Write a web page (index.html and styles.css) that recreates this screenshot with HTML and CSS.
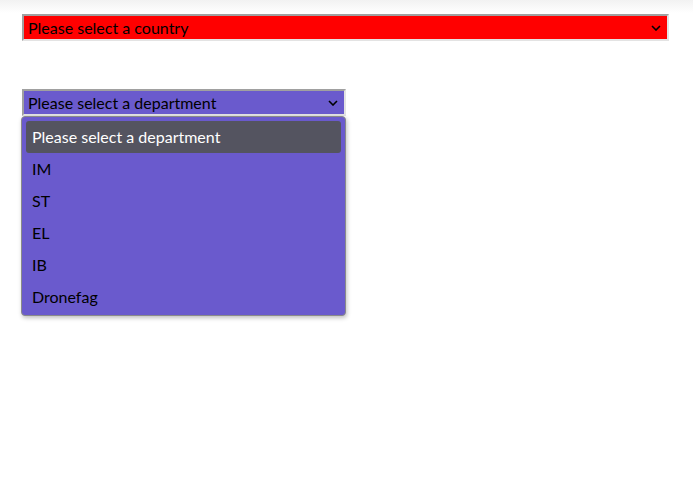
FILE: index.html
```html
<!DOCTYPE html>
<html>
<head>
<meta charset="utf-8">
<link rel="stylesheet" href="styles.css">
</head>
<body>
<div class="page">
  <div class="select red">
    <span class="label">Please select a country</span>
    <svg class="chev" width="10" height="6" viewBox="0 0 10 6"><path d="M1 1 L5 5 L9 1" fill="none" stroke="#000" stroke-width="1.6"/></svg>
  </div>
  <div class="dept">
    <div class="select purple">
      <span class="label">Please select a department</span>
      <svg class="chev" width="10" height="6" viewBox="0 0 10 6"><path d="M1 1 L5 5 L9 1" fill="none" stroke="#000" stroke-width="1.6"/></svg>
    </div>
    <ul class="list">
      <li class="opt selected">Please select a department</li>
      <li class="opt">IM</li>
      <li class="opt">ST</li>
      <li class="opt">EL</li>
      <li class="opt">IB</li>
      <li class="opt">Dronefag</li>
    </ul>
  </div>
</div>
</body>
</html>
```
FILE: styles.css
```css
html, body { margin: 0; padding: 0; background: #fff; }
body {
  font-family: Lato, "Noto Sans", sans-serif;
  font-size: 16px;
  color: #000;
  width: 693px;
  height: 501px;
  overflow: hidden;
  background: linear-gradient(#f2f2f2, #fff 13px);
}
.page { padding: 14px 0 0 22px; }
.select {
  box-sizing: border-box;
  height: 27px;
  border-style: solid;
  border-width: 2px;
  border-color: #a0a0a0 #e3e3e3 #e3e3e3 #a0a0a0;
  display: flex;
  align-items: center;
  justify-content: space-between;
  padding: 0 6px 0 4px;
}
.red { width: 647px; background: #ff0000; }
.purple { width: 324px; background: #6a5acd; }
.label { line-height: 20px; }
.chev { display: block; }
.dept { margin-top: 48px; width: 324px; }
.list {
  list-style: none;
  margin: 0 0 0 -1px;
  padding: 4px;
  box-sizing: border-box;
  width: 325px;
  height: 200px;
  background: #6a5acd;
  border: 1px solid #8a8a8a;
  border-radius: 4px;
  box-shadow: 1px 2px 4px rgba(0,0,0,0.25);
}
.opt {
  height: 32px;
  line-height: 32px;
  padding: 0 6px;
  border-radius: 3px;
  color: #000;
}
.opt.selected { background: #545460; color: #fff; }
```
